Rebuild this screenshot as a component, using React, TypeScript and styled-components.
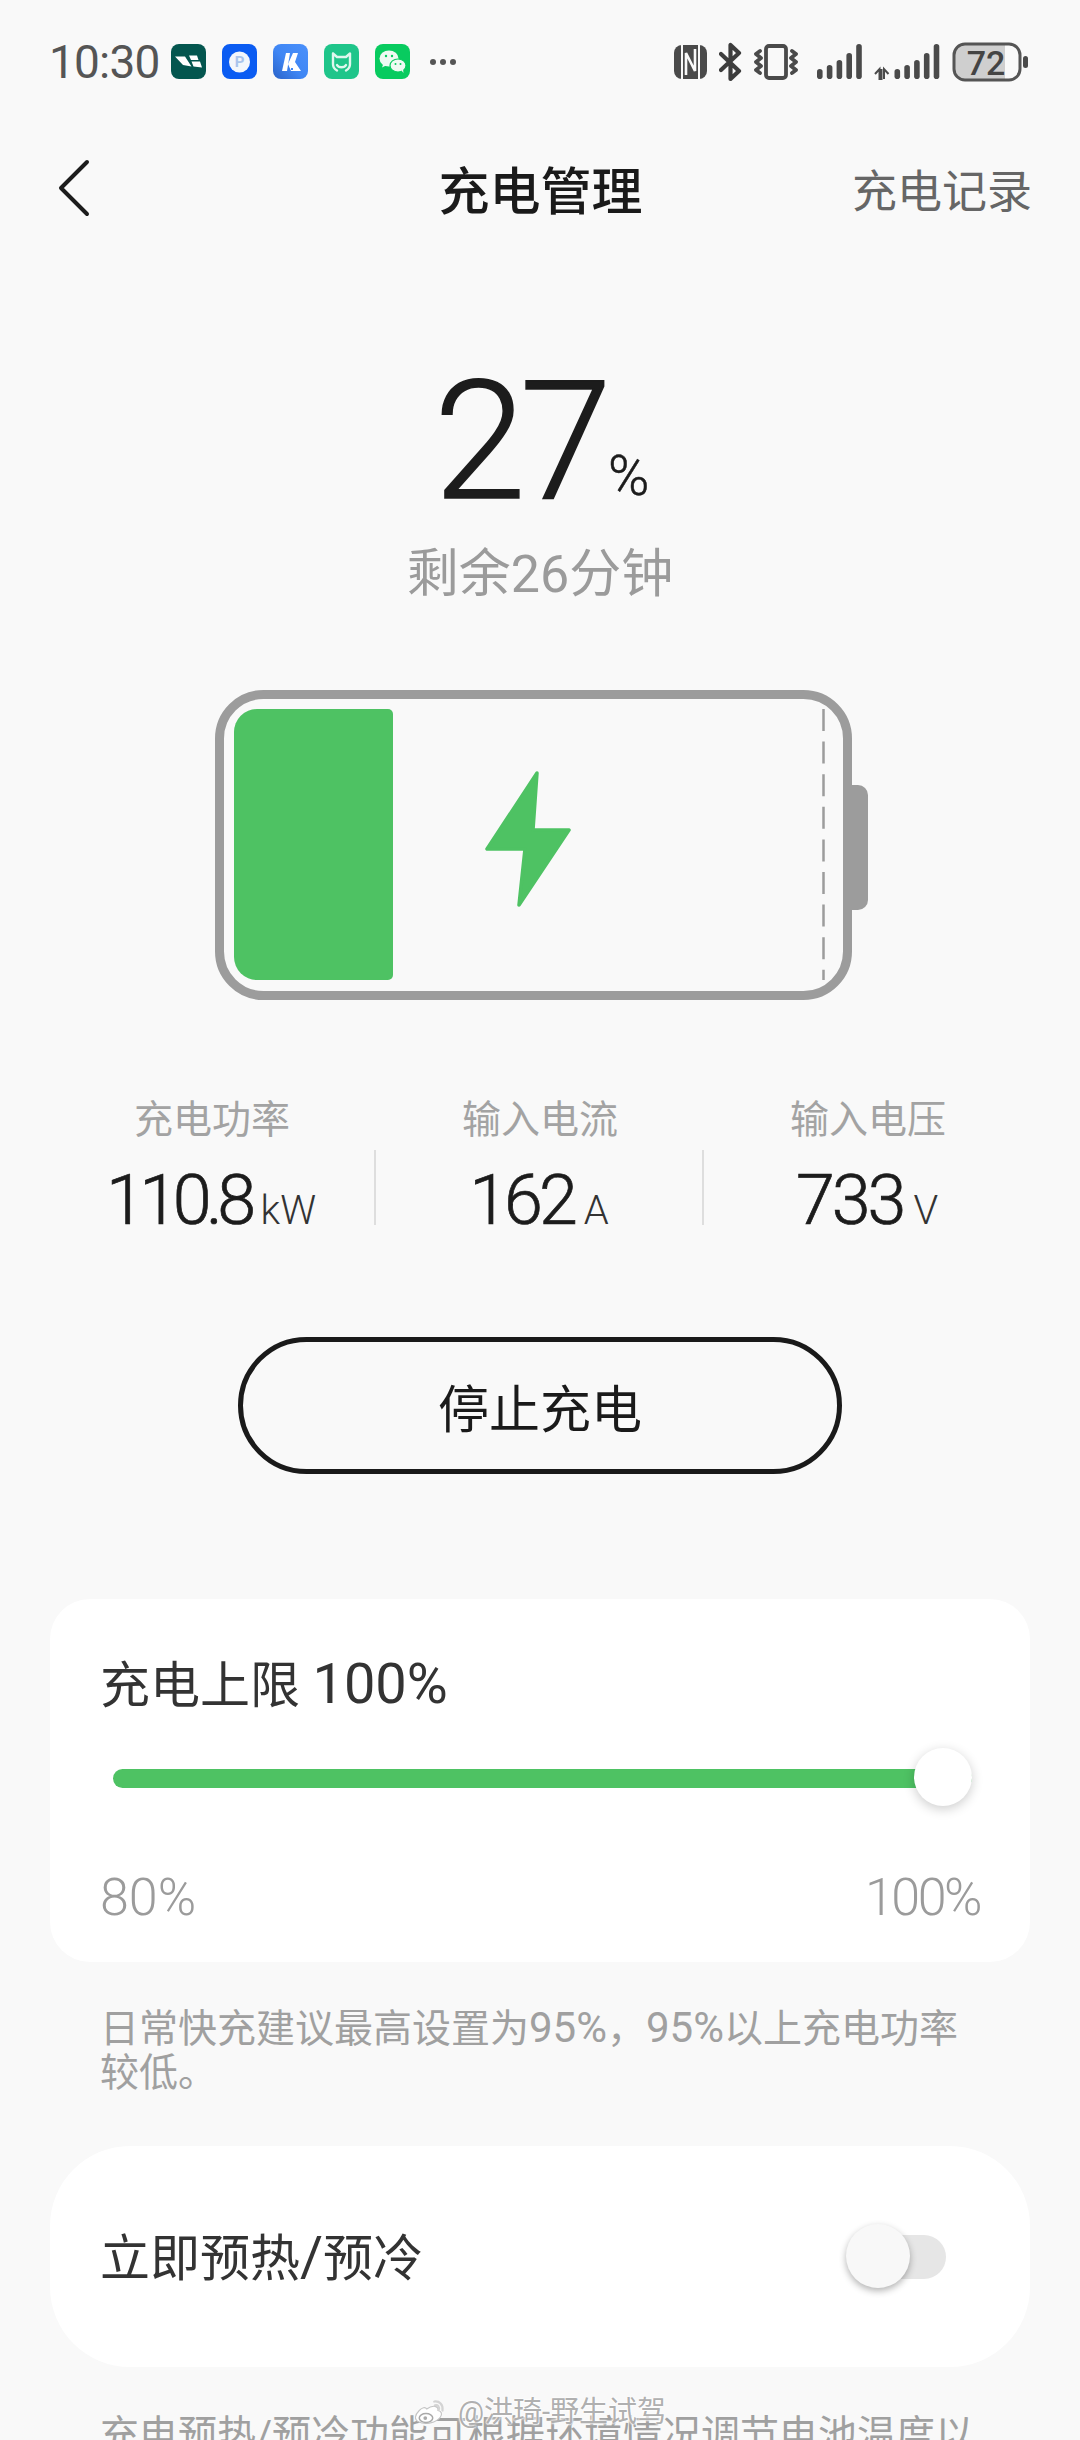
import React from "react";
import styled, { createGlobalStyle } from "styled-components";

const Global = createGlobalStyle`
  html, body { margin: 0; padding: 0; background: #f9f9f9; }
  * { box-sizing: border-box; }
`;

const Page = styled.div`
  position: relative;
  width: 1080px;
  height: 2440px;
  overflow: hidden;
  background: #f9f9f9;
  font-family: Roboto, "Noto Sans CJK SC", sans-serif;
  color: #1c1c1c;
`;

const StatusBar = styled.div`
  display: flex;
  align-items: center;
  height: 143px;
  padding: 0 52px 20px 49px;
`;
const Time = styled.span`
  font-size: 46px;
  line-height: 40px;
  color: #555;
  letter-spacing: -0.8px;
  width: 122px;
`;
const AppIcons = styled.div`
  display: flex;
  gap: 16px;
  align-items: center;
`;
const AppIcon = styled.svg`
  width: 35px;
  height: 35px;
  display: block;
`;
const More = styled.svg`
  width: 28px;
  height: 8px;
  margin-left: 19px;
`;
const SysIcons = styled.div`
  display: flex;
  align-items: center;
  margin-left: auto;
`;
const SysIcon = styled.svg<{ $gap: number }>`
  display: block;
  height: 40px;
  margin-left: ${(p) => p.$gap}px;
`;

const Nav = styled.div`
  display: grid;
  grid-template-columns: 1fr auto 1fr;
  align-items: center;
  height: 100px;
  padding: 0 48px 0 49px;
`;
const Back = styled.svg`
  width: 32px;
  height: 58px;
  margin: 0 0 10px 9px;
  display: block;
`;
const Title = styled.div`
  font-size: 51px;
  line-height: 60px;
  font-weight: 500;
  color: #1a1a1a;
`;
const NavLink = styled.div`
  justify-self: end;
  font-size: 45px;
  line-height: 60px;
  color: #666;
`;

const Hero = styled.div`
  display: flex;
  flex-direction: column;
  align-items: center;
  margin-top: 114px;
`;
const PercentRow = styled.div`
  display: flex;
  align-items: flex-end;
  padding-left: 3px;
`;
const BigNumber = styled.span`
  font-size: 166px;
  line-height: 170px;
  font-weight: 300;
  letter-spacing: -6px;
  -webkit-text-stroke: 1.5px #1c1c1c;
  color: #1c1c1c;
`;
const PercentSign = styled.span`
  font-size: 56px;
  line-height: 60px;
  font-weight: 300;
  -webkit-text-stroke: 0.5px #1c1c1c;
  margin: 0 0 21px 2px;
`;
const Remaining = styled.div`
  margin-top: 18px;
  font-size: 52px;
  line-height: 60px;
  color: #9b9b9b;
  font-weight: 400;
`;

const BatteryWrap = styled.div`
  display: flex;
  justify-content: flex-start;
  margin-top: 85px;
  padding-left: 215px;
`;
const BatterySvg = styled.svg`
  width: 654px;
  height: 310px;
  display: block;
`;

const Stats = styled.div`
  display: grid;
  grid-template-columns: repeat(3, 328px);
  margin-top: 98px;
  padding: 0 48px;
`;
const Stat = styled.div`
  display: flex;
  flex-direction: column;
  align-items: center;
`;
const StatLabel = styled.div`
  font-size: 39px;
  line-height: 44px;
  color: #a3a3a3;
`;
const StatRow = styled.div<{ $divider: boolean }>`
  align-self: stretch;
  display: flex;
  justify-content: center;
  align-items: flex-end;
  height: 75px;
  margin-top: 8px;
  border-right: 2px solid ${(p) => (p.$divider ? "#dedede" : "transparent")};
`;
const StatValue = styled.span<{ $spacing: number }>`
  font-size: 70px;
  line-height: 50px;
  font-weight: 300;
  letter-spacing: ${(p) => p.$spacing}px;
  -webkit-text-stroke: 0.7px #1c1c1c;
`;
const StatUnit = styled.span`
  font-size: 40px;
  line-height: 0;
  font-weight: 300;
  letter-spacing: 0;
  margin-left: 10px;
  color: #333;
  -webkit-text-stroke: 0;
`;

const StopButton = styled.div`
  display: flex;
  align-items: center;
  justify-content: center;
  width: 604px;
  height: 137px;
  margin: 112px auto 0;
  border: 5px solid #1a1a1a;
  border-radius: 70px;
  font-size: 51px;
  color: #1a1a1a;
`;

const Card = styled.div`
  margin: 125px 50px 0;
  height: 363px;
  padding: 57px 50px 39px 50px;
  background: #fff;
  border-radius: 40px;
`;
const CardTitle = styled.div`
  font-size: 50px;
  line-height: 60px;
  color: #333;
  font-weight: 400;
`;
const Latin = styled.span<{ $size: number }>`
  font-size: ${(p) => p.$size}px;
  line-height: 0;
`;
const Slider = styled.div`
  position: relative;
  display: flex;
  align-items: center;
  height: 60px;
  margin: 32px 8px 0 13px;
`;
const SliderTrack = styled.div`
  flex: 1;
  height: 19px;
  border-radius: 10px;
  background: #4ec263;
`;
const SliderThumb = styled.div`
  position: absolute;
  right: 0;
  top: 0;
  width: 58px;
  height: 58px;
  border-radius: 50%;
  background: #fff;
  box-shadow: 0 3px 12px rgba(0, 0, 0, 0.2);
`;
const Ticks = styled.div`
  display: flex;
  justify-content: space-between;
  margin-top: 65px;
  font-size: 52px;
  line-height: 50px;
  font-weight: 300;
  color: #9b9b9b;
`;
const Tick = styled.span<{ $spacing: number }>`
  letter-spacing: ${(p) => p.$spacing}px;
`;

const Note = styled.div<{ $top: number }>`
  margin: ${(p) => p.$top}px 100px 0 100px;
  font-size: 39px;
  line-height: 44px;
  color: #a0a0a0;
`;

const ToggleCard = styled.div`
  display: flex;
  align-items: center;
  justify-content: space-between;
  height: 221px;
  margin: 51px 50px 0;
  padding: 4px 84px 0 50px;
  background: #fff;
  border-radius: 80px;
`;
const Toggle = styled.div`
  position: relative;
  width: 96px;
  height: 44px;
  border-radius: 22px;
  margin-bottom: 4px;
  background: #e6e6e6;
`;
const ToggleKnob = styled.div`
  position: absolute;
  left: -4px;
  top: -11px;
  width: 64px;
  height: 64px;
  border-radius: 50%;
  background: #f8f8f8;
  box-shadow: 0 3px 7px rgba(0, 0, 0, 0.3);
`;

const Watermark = styled.div`
  position: absolute;
  left: 413px;
  bottom: 6px;
  display: flex;
  align-items: center;
  gap: 10px;
  font-size: 29px;
  line-height: 44px;
  color: rgba(165, 165, 165, 0.9);
  text-shadow: 0 0 2px #fff, 0 0 2px #fff, 0 0 3px #fff;
`;
const WeiboLogo = styled.svg`
  width: 35px;
  height: 30px;
  display: block;
`;

const sigTops = [68, 64, 59, 52, 43];

const AppIconsGroup = () => (
  <AppIcons>
    <AppIcon viewBox="0 0 35 35">
      <rect width="35" height="35" rx="8" fill="#04564f" />
      <path d="M4 12.5h10l6.5 10-8.500-1.500zM18 11.500h8l1.500 4.500h-7.500zM20.500 17.500h8.500l2 6-8.500-1z" fill="#fff" />
    </AppIcon>
    <AppIcon viewBox="0 0 35 35">
      <rect width="35" height="35" rx="8" fill="#0b5cf2" />
      <circle cx="17.500" cy="18" r="10.500" fill="#f3f6fb" />
      <text x="17.500" y="23" textAnchor="middle" fontSize="15" fontWeight="700" fontFamily="Roboto" fill="#aac4ec">P</text>
    </AppIcon>
    <AppIcon viewBox="0 0 35 35">
      <defs>
        <linearGradient id="kg" x1="0" y1="1" x2="1" y2="0">
          <stop offset="0" stopColor="#2a62c8" />
          <stop offset="0.45" stopColor="#3f86f4" />
          <stop offset="1" stopColor="#4a90fb" />
        </linearGradient>
      </defs>
      <rect width="35" height="35" rx="8" fill="url(#kg)" />
      <path d="M9 27 13 9h4l-3 18z" fill="#fff" />
      <path d="M25 9h-5l-5 11 3 7h10l-6-9z" fill="#fff" />
      <rect x="18" y="24" width="2" height="2" fill="#3f86f4" />
    </AppIcon>
    <AppIcon viewBox="0 0 35 35">
      <rect width="35" height="35" rx="8" fill="#1fc58a" />
      <path d="M9 9.500l4 3.500h9l4-3.500V20a8.500 7.500 0 0 1-4 6.500M9 9.500V20a8.500 7.500 0 0 0 4 6.500" fill="none" stroke="#dff7ee" strokeWidth="2.400" strokeLinejoin="round" strokeLinecap="round" />
      <path d="M13 21c1.500 3 7.500 3 9 0" fill="none" stroke="#dff7ee" strokeWidth="2.400" strokeLinecap="round" />
    </AppIcon>
    <AppIcon viewBox="0 0 35 35">
      <rect width="35" height="35" rx="8" fill="#08cb5f" />
      <ellipse cx="14" cy="14.500" rx="9.500" ry="8" fill="#eefaf2" />
      <path d="M8.500 19.500l-1.500 4 5-2.500z" fill="#eefaf2" />
      <ellipse cx="23" cy="21.500" rx="8" ry="6.500" fill="#eefaf2" stroke="#08cb5f" strokeWidth="1.200" />
      <path d="M26.500 26.500l2 2.500-.5-4z" fill="#eefaf2" />
      <circle cx="11" cy="12" r="1.200" fill="#08cb5f" />
      <circle cx="17" cy="12" r="1.200" fill="#08cb5f" />
      <circle cx="20.500" cy="20" r="1" fill="#08cb5f" />
      <circle cx="25.500" cy="20" r="1" fill="#08cb5f" />
    </AppIcon>
  </AppIcons>
);

const SysIconsGroup = () => (
  <SysIcons>
    <SysIcon $gap={0} width="33" viewBox="0 0 33 40">
      <rect x="0" y="3" width="33" height="34" rx="8" fill="#4a4a4a" />
      <path d="M8 3v34M25 3v34" stroke="#f9f9f9" strokeWidth="2" />
      <path d="M12 33V11l9 18V7" fill="none" stroke="#f9f9f9" strokeWidth="2.600" strokeLinejoin="miter" />
    </SysIcon>
    <SysIcon $gap={12} width="23" viewBox="0 0 23 40">
      <path d="M2 28 20 11 11.500 3v34l8.500-8L2 12" fill="none" stroke="#3d3d3d" strokeWidth="4.200" strokeLinejoin="round" strokeLinecap="round" />
    </SysIcon>
    <SysIcon $gap={12} width="44" viewBox="0 0 44 40">
      <rect x="12" y="4" width="20" height="32" rx="3" fill="none" stroke="#4a4a4a" strokeWidth="3.800" />
      <path d="M6 9 2 12l5 4-5 4 5 4-5 4 4 3" fill="none" stroke="#4a4a4a" strokeWidth="3.800" strokeLinejoin="round" strokeLinecap="round" />
      <path d="M38 9l4 3-5 4 5 4-5 4 5 4-4 3" fill="none" stroke="#4a4a4a" strokeWidth="3.800" strokeLinejoin="round" strokeLinecap="round" />
    </SysIcon>
    <SysIcon $gap={19} width="46" viewBox="0 0 46 40">
      {sigTops.map((t, i) => (
        <rect key={i} x={i * 9.800} y={t - 41} width="5.600" height={78 - t} rx="2.800" fill="#4a4a4a" />
      ))}
    </SysIcon>
    <SysIcon $gap={11} width="66" viewBox="0 0 66 40">
      <path d="M1 32l4.500-5v10h2V27M10 37V27l4.500 5" fill="none" stroke="#4a4a4a" strokeWidth="2" />
      {sigTops.map((t, i) => (
        <rect key={i} x={20.500 + i * 9.800} y={t - 41} width="5.600" height={78 - t} rx="2.800" fill="#4a4a4a" />
      ))}
    </SysIcon>
    <SysIcon $gap={12} width="76" viewBox="0 0 76 40">
      <path d="M10 3h43v34H10a8 8 0 0 1-8-8V11a8 8 0 0 1 8-8z" fill="#cfcfcf" />
      <rect x="2" y="2" width="66" height="36" rx="11" fill="none" stroke="#555" strokeWidth="3" />
      <text x="34" y="33" textAnchor="middle" fontFamily="Roboto" fontSize="34" fontWeight="500" fill="#444">72</text>
      <rect x="71" y="14" width="5" height="12" rx="2.500" fill="#4a4a4a" />
    </SysIcon>
  </SysIcons>
);

const Battery = () => (
  <BatterySvg viewBox="215 690 654 310">
    <path d="M852 785h6a10 10 0 0 1 10 10v105a10 10 0 0 1-10 10h-6z" fill="#9c9c9c" />
    <rect x="219.500" y="694.500" width="628" height="301" rx="44" fill="none" stroke="#9c9c9c" strokeWidth="9" />
    <path d="M257 709h131a5 5 0 0 1 5 5v261a5 5 0 0 1-5 5H257a23 23 0 0 1-23-23V732a23 23 0 0 1 23-23z" fill="#4ec263" />
    <path d="M823.500 709V980" stroke="#9c9c9c" strokeWidth="2.500" strokeDasharray="22 10.600" fill="none" />
    <path d="M537 773 487 849h38l-6 56 50-75h-36z" fill="#4ec263" stroke="#4ec263" strokeWidth="3.500" strokeLinejoin="round" />
  </BatterySvg>
);

export default function App() {
  return (
    <Page>
      <Global />
      <StatusBar>
        <Time>10:30</Time>
        <AppIconsGroup />
        <More viewBox="0 0 28 8">
          <circle cx="4" cy="4" r="3" fill="#555" />
          <circle cx="14" cy="4" r="3" fill="#555" />
          <circle cx="24" cy="4" r="3" fill="#555" />
        </More>
        <SysIconsGroup />
      </StatusBar>
      <Nav>
        <Back viewBox="0 0 32 58">
          <path d="M29 3 3 29l26 26" fill="none" stroke="#1c1c1c" strokeWidth="4" strokeLinecap="round" strokeLinejoin="round" />
        </Back>
        <Title>充电管理</Title>
        <NavLink>充电记录</NavLink>
      </Nav>
      <Hero>
        <PercentRow>
          <BigNumber>27</BigNumber>
          <PercentSign>%</PercentSign>
        </PercentRow>
        <Remaining>剩余26分钟</Remaining>
      </Hero>
      <BatteryWrap>
        <Battery />
      </BatteryWrap>
      <Stats>
        <Stat>
          <StatLabel>充电功率</StatLabel>
          <StatRow $divider>
            <StatValue $spacing={-5.5}>
              110.8<StatUnit>kW</StatUnit>
            </StatValue>
          </StatRow>
        </Stat>
        <Stat>
          <StatLabel>输入电流</StatLabel>
          <StatRow $divider>
            <StatValue $spacing={-4}>
              162<StatUnit>A</StatUnit>
            </StatValue>
          </StatRow>
        </Stat>
        <Stat>
          <StatLabel>输入电压</StatLabel>
          <StatRow $divider={false}>
            <StatValue $spacing={-3}>
              733<StatUnit>V</StatUnit>
            </StatValue>
          </StatRow>
        </Stat>
      </Stats>
      <StopButton>停止充电</StopButton>
      <Card>
        <CardTitle>
          充电上限 <Latin $size={56}>100%</Latin>
        </CardTitle>
        <Slider>
          <SliderTrack />
          <SliderThumb />
        </Slider>
        <Ticks>
          <Tick $spacing={0}>80%</Tick>
          <Tick $spacing={-2.5}>100%</Tick>
        </Ticks>
      </Card>
      <Note $top={45}>
        日常快充建议最高设置为<Latin $size={42}>95%</Latin>，<Latin $size={42}>95%</Latin>以上充电功率
        <br />
        较低。
      </Note>
      <ToggleCard>
        <CardTitle>
          立即预热<Latin $size={56}>/</Latin>预冷
        </CardTitle>
        <Toggle>
          <ToggleKnob />
        </Toggle>
      </ToggleCard>
      <Note $top={46}>充电预热/预冷功能可根据环境情况调节电池温度以</Note>
      <Watermark>
        <WeiboLogo viewBox="0 0 46 40">
          <path d="M18 16c8-6 16-4 15 2 5 1 6 5 3 9-5 7-20 11-29 6C1 30 2 24 8 18c4-4 8-5 10-2z" fill="#fff" stroke="#c4c4c4" strokeWidth="1.500" />
          <ellipse cx="17" cy="28" rx="9" ry="6" fill="none" stroke="#aaa" strokeWidth="2" />
          <circle cx="16" cy="28" r="2.500" fill="#aaa" />
          <path d="M28 6c7-1 12 4 11 12M29 11c4-1 6 2 5 6" fill="none" stroke="#d4d4d4" strokeWidth="3" strokeLinecap="round" />
        </WeiboLogo>
        <span>@洪琦-野生试驾</span>
      </Watermark>
    </Page>
  );
}
